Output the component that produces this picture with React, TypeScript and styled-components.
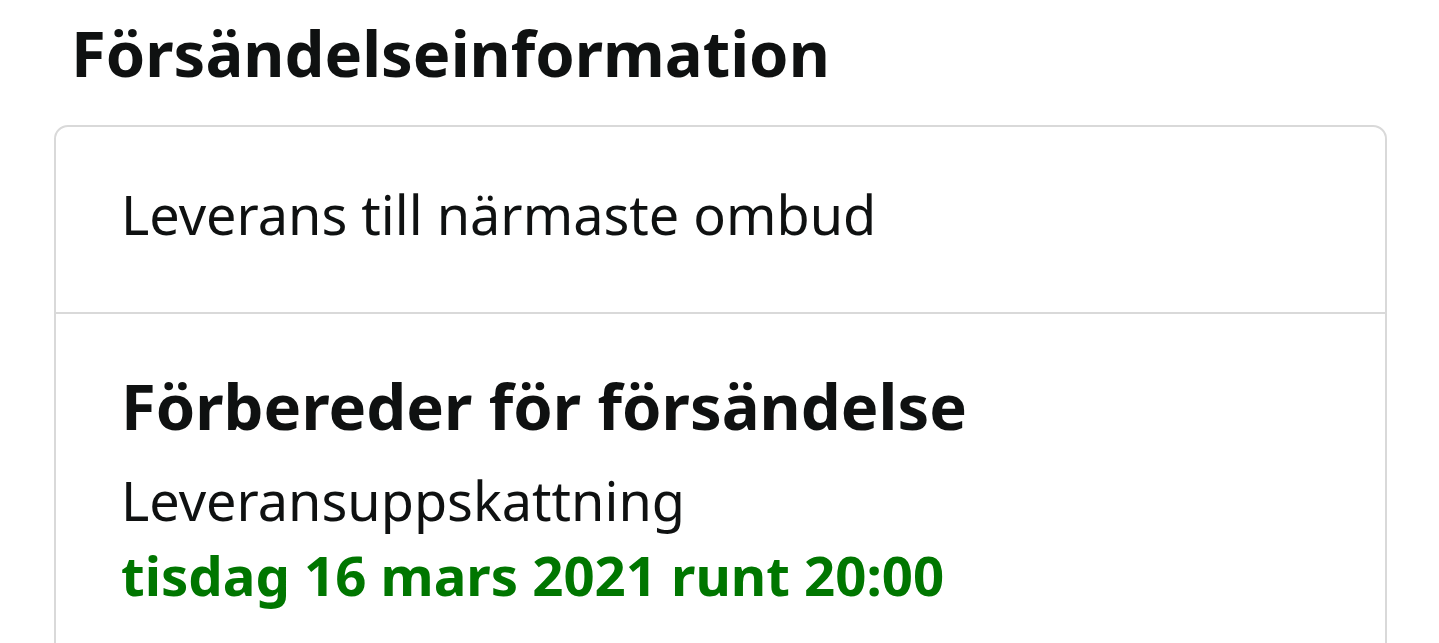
import React from "react";
import styled, { createGlobalStyle } from "styled-components";

const GlobalStyle = createGlobalStyle`
  html, body {
    margin: 0;
    padding: 0;
    background: #fff;
  }
  body {
    font-family: "Noto Sans", "Open Sans", Arial, sans-serif;
    color: #0f1111;
  }
`;

interface Shipment {
  method: string;
  status: string;
  estimateLabel: string;
  estimate: string;
}

const shipment: Shipment = {
  method: "Leverans till närmaste ombud",
  status: "Förbereder för försändelse",
  estimateLabel: "Leveransuppskattning",
  estimate: "tisdag 16 mars 2021 runt 20:00",
};

function App() {
  return (
    <Page>
      <GlobalStyle />
      <Title>Försändelseinformation</Title>
      <Card>
        <MethodRow>{shipment.method}</MethodRow>
        <StatusRow>
          <Status>{shipment.status}</Status>
          <Label>{shipment.estimateLabel}</Label>
          <Estimate>{shipment.estimate}</Estimate>
        </StatusRow>
      </Card>
    </Page>
  );
}

const Page = styled.div`
  padding: 0 52px 0 54px;
  height: 643px;
  overflow: hidden;
  box-sizing: border-box;
`;

const Title = styled.h1`
  margin: 0 0 32px;
  padding: 13px 0 0 17px;
  font-size: 63.3px;
  font-weight: 700;
  line-height: 80px;
  color: #0f1111;
`;

const Card = styled.div`
  border: 2px solid #d9d9d9;
  border-radius: 14px;
  background: #fff;
`;

const MethodRow = styled.div`
  padding: 57px 0 68px 65px;
  border-bottom: 2px solid #d9d9d9;
  font-size: 54px;
  line-height: 60px;
`;

const StatusRow = styled.div`
  padding: 52px 0 80px 65px;
  display: flex;
  flex-direction: column;
`;

const Status = styled.div`
  font-size: 63.3px;
  font-weight: 700;
  line-height: 80px;
  margin-bottom: 22px;
`;

const Label = styled.div`
  font-size: 54px;
  line-height: 64px;
  margin-bottom: 11px;
`;

const Estimate = styled.div`
  font-size: 54.5px;
  font-weight: 700;
  line-height: 64px;
  color: #007600;
`;

export default App;
